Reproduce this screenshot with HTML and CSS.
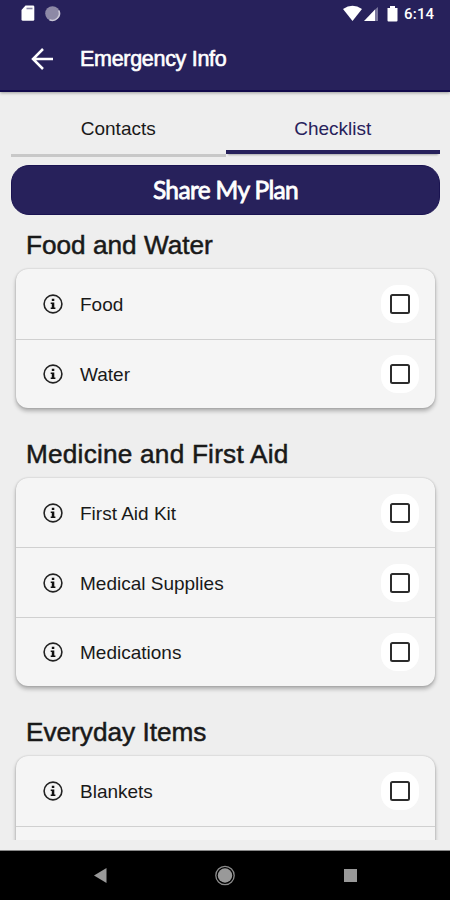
FILE: index.html
```html
<!DOCTYPE html>
<html lang="en">
<head>
<meta charset="utf-8">
<title>Emergency Info</title>
<link rel="stylesheet" href="styles.css">
</head>
<body>
<svg class="defs" width="0" height="0" aria-hidden="true">
  <symbol id="info" viewBox="0 0 20 20">
    <circle cx="10" cy="10" r="8.9" fill="none" stroke="#222" stroke-width="1.6"/>
    <path d="M8.800 4.800h2.500v2.200H8.800zM7.700 8.500h3.600v5h1.100v1.500H7.700v-1.500h1.100V10H7.700z" fill="#111"/>
  </symbol>
</svg>
<header class="top">
  <div class="status">
    <svg class="status-left" width="42" height="18" viewBox="0 0 42 18">
      <path d="M4.500 0.500H12q1.300 0 1.300 1.300V14.500q0 1.300-1.300 1.300H2Q.5 15.800.5 14.500V5z" fill="#fff"/>
      <path d="M5.500 3.500h6" stroke="#8c89a8" stroke-width="1.600"/>
      <circle cx="31.500" cy="8.500" r="7.300" fill="#8d89a6"/>
      <path d="M37.800 5.500A7 7 0 0 1 28.500 14.700" fill="none" stroke="#c9c7d6" stroke-width="1.600"/>
    </svg>
    <svg class="status-right" width="56" height="18" viewBox="0 0 56 18">
      <path d="M0 4Q9.500-2.500 19 4L9.500 16z" fill="#fff"/>
      <path d="M32 4.500V16H21z" fill="#fff"/>
      <path d="M32 4.500V16H35V2z" fill="#7b779d"/>
      <path d="M47 1h5v2h2.500v12.500q0 1-1 1h-8q-1 0-1-1V3H47z" fill="#fff"/>
    </svg>
    <span class="time">6:14</span>
  </div>
  <div class="bar">
    <svg class="back" width="24" height="24" viewBox="0 0 24 24"><path d="M23 12H3M13 2L3 12l10 10" fill="none" stroke="#fff" stroke-width="2.500"/></svg>
    <h1>Emergency Info</h1>
  </div>
</header>
<main>
  <nav class="tabs">
    <div class="tab">Contacts</div>
    <div class="tab active">Checklist</div>
  </nav>
  <button class="share">Share My Plan</button>
  <section>
    <h2>Food and Water</h2>
    <div class="card">
      <div class="row"><svg class="info"><use href="#info"/></svg><span class="name">Food</span><span class="check"><i></i></span></div>
      <div class="row"><svg class="info"><use href="#info"/></svg><span class="name">Water</span><span class="check"><i></i></span></div>
    </div>
  </section>
  <section>
    <h2 class="wide">Medicine and First Aid</h2>
    <div class="card">
      <div class="row"><svg class="info"><use href="#info"/></svg><span class="name">First Aid Kit</span><span class="check"><i></i></span></div>
      <div class="row"><svg class="info"><use href="#info"/></svg><span class="name">Medical Supplies</span><span class="check"><i></i></span></div>
      <div class="row"><svg class="info"><use href="#info"/></svg><span class="name">Medications</span><span class="check"><i></i></span></div>
    </div>
  </section>
  <section>
    <h2>Everyday Items</h2>
    <div class="card">
      <div class="row"><svg class="info"><use href="#info"/></svg><span class="name">Blankets</span><span class="check"><i></i></span></div>
      <div class="row"></div>
    </div>
  </section>
</main>
<footer>
  <svg width="450" height="49" viewBox="0 0 450 49">
    <path d="M94 24.500L106.500 17v15z" fill="#999"/>
    <circle cx="225" cy="24.500" r="9.200" fill="none" stroke="#8b8b8b" stroke-width="1.300"/>
    <circle cx="225" cy="24.500" r="7.200" fill="#999"/>
    <rect x="344" y="18" width="13" height="13" fill="#999"/>
  </svg>
</footer>
</body>
</html>
```

FILE: styles.css
```css
* { box-sizing: border-box; }
body {
  margin: 0;
  width: 450px;
  height: 900px;
  overflow: hidden;
  display: flex;
  flex-direction: column;
  background: #eee;
  font-family: "Liberation Sans", Arial, sans-serif;
  color: #191919;
}
.defs { display: none; }
.top {
  flex: none;
  height: 92px;
  background: #27215b;
  border-bottom: 2px solid #120a4c;
  box-shadow: 0 1px 3px rgba(0, 0, 0, .35);
}
.status {
  display: flex;
  align-items: center;
  height: 27px;
  padding: 0 16px 0 21px;
}
.status-left { margin-right: auto; }
.time {
  width: 30px;
  margin-left: 5px;
  font: 500 15px/18px Roboto, sans-serif;
  letter-spacing: .2px;
  color: #fff;
}
.bar {
  display: flex;
  align-items: center;
  height: 64px;
  padding-left: 30px;
}
h1 {
  margin: 1px 0 0 26px;
  font-size: 21.5px;
  font-weight: 400;
  letter-spacing: -.3px;
  color: #fff;
  -webkit-text-stroke: .6px #fff;
}
main {
  flex: none;
  height: 748px;
  padding: 0 10px 0 11px;
  overflow: hidden;
}
.tabs {
  display: flex;
  height: 65px;
  margin-bottom: 8px;
}
.tab {
  flex: 1;
  height: 65px;
  border-bottom: 3px solid #c8c8c8;
  font-size: 19px;
  line-height: 74px;
  text-align: center;
}
.tab.active {
  height: 62px;
  border-bottom: 4px solid #27215b;
  box-shadow: 0 3px 2px -2px rgba(0, 0, 0, .3);
  color: #27215b;
}
.share {
  display: block;
  width: 100%;
  height: 50px;
  padding: 0;
  border: 1px solid #1a1351;
  border-radius: 18px;
  background: #27215b;
  color: #fff;
  font: 400 24.5px/48px Lato, sans-serif;
  letter-spacing: -.65px;
  -webkit-text-stroke: .8px #fff;
}
section { padding: 0 5px; }
h2 {
  height: 54px;
  margin: 0;
  padding: 13px 0 0 10px;
  font-size: 26.2px;
  line-height: 34px;
  font-weight: 400;
  -webkit-text-stroke: .5px #191919;
}
h2.wide { letter-spacing: .22px; }
section + section h2 { height: 70px; padding-top: 29px; }
.card {
  border-radius: 12px;
  background: #f5f5f5;
  box-shadow: 0 3px 4px rgba(0, 0, 0, .28), 0 0 2px rgba(0, 0, 0, .2);
}
.row {
  display: flex;
  align-items: center;
  height: 69.3px;
  padding: 0 16px 0 27px;
}
.card .row:first-child { height: 69.6px; }
.row + .row { border-top: 1.500px solid #d0d0d0; }
.info { width: 20px; height: 20px; }
.name {
  flex: 1;
  margin: 2px 0 0 17px;
  font-size: 19px;
}
.check {
  display: flex;
  align-items: center;
  justify-content: center;
  width: 38px;
  height: 38px;
  border-radius: 16px;
  background: #fff;
}
.check i {
  width: 20px;
  height: 20px;
  border: 2px solid #2c2c2c;
  border-radius: 2.500px;
}
footer {
  flex: none;
  height: 49px;
  margin-top: 11px;
  background: #000;
  box-shadow: 0 -1px 0 #888;
}
footer svg { display: block; }
```
